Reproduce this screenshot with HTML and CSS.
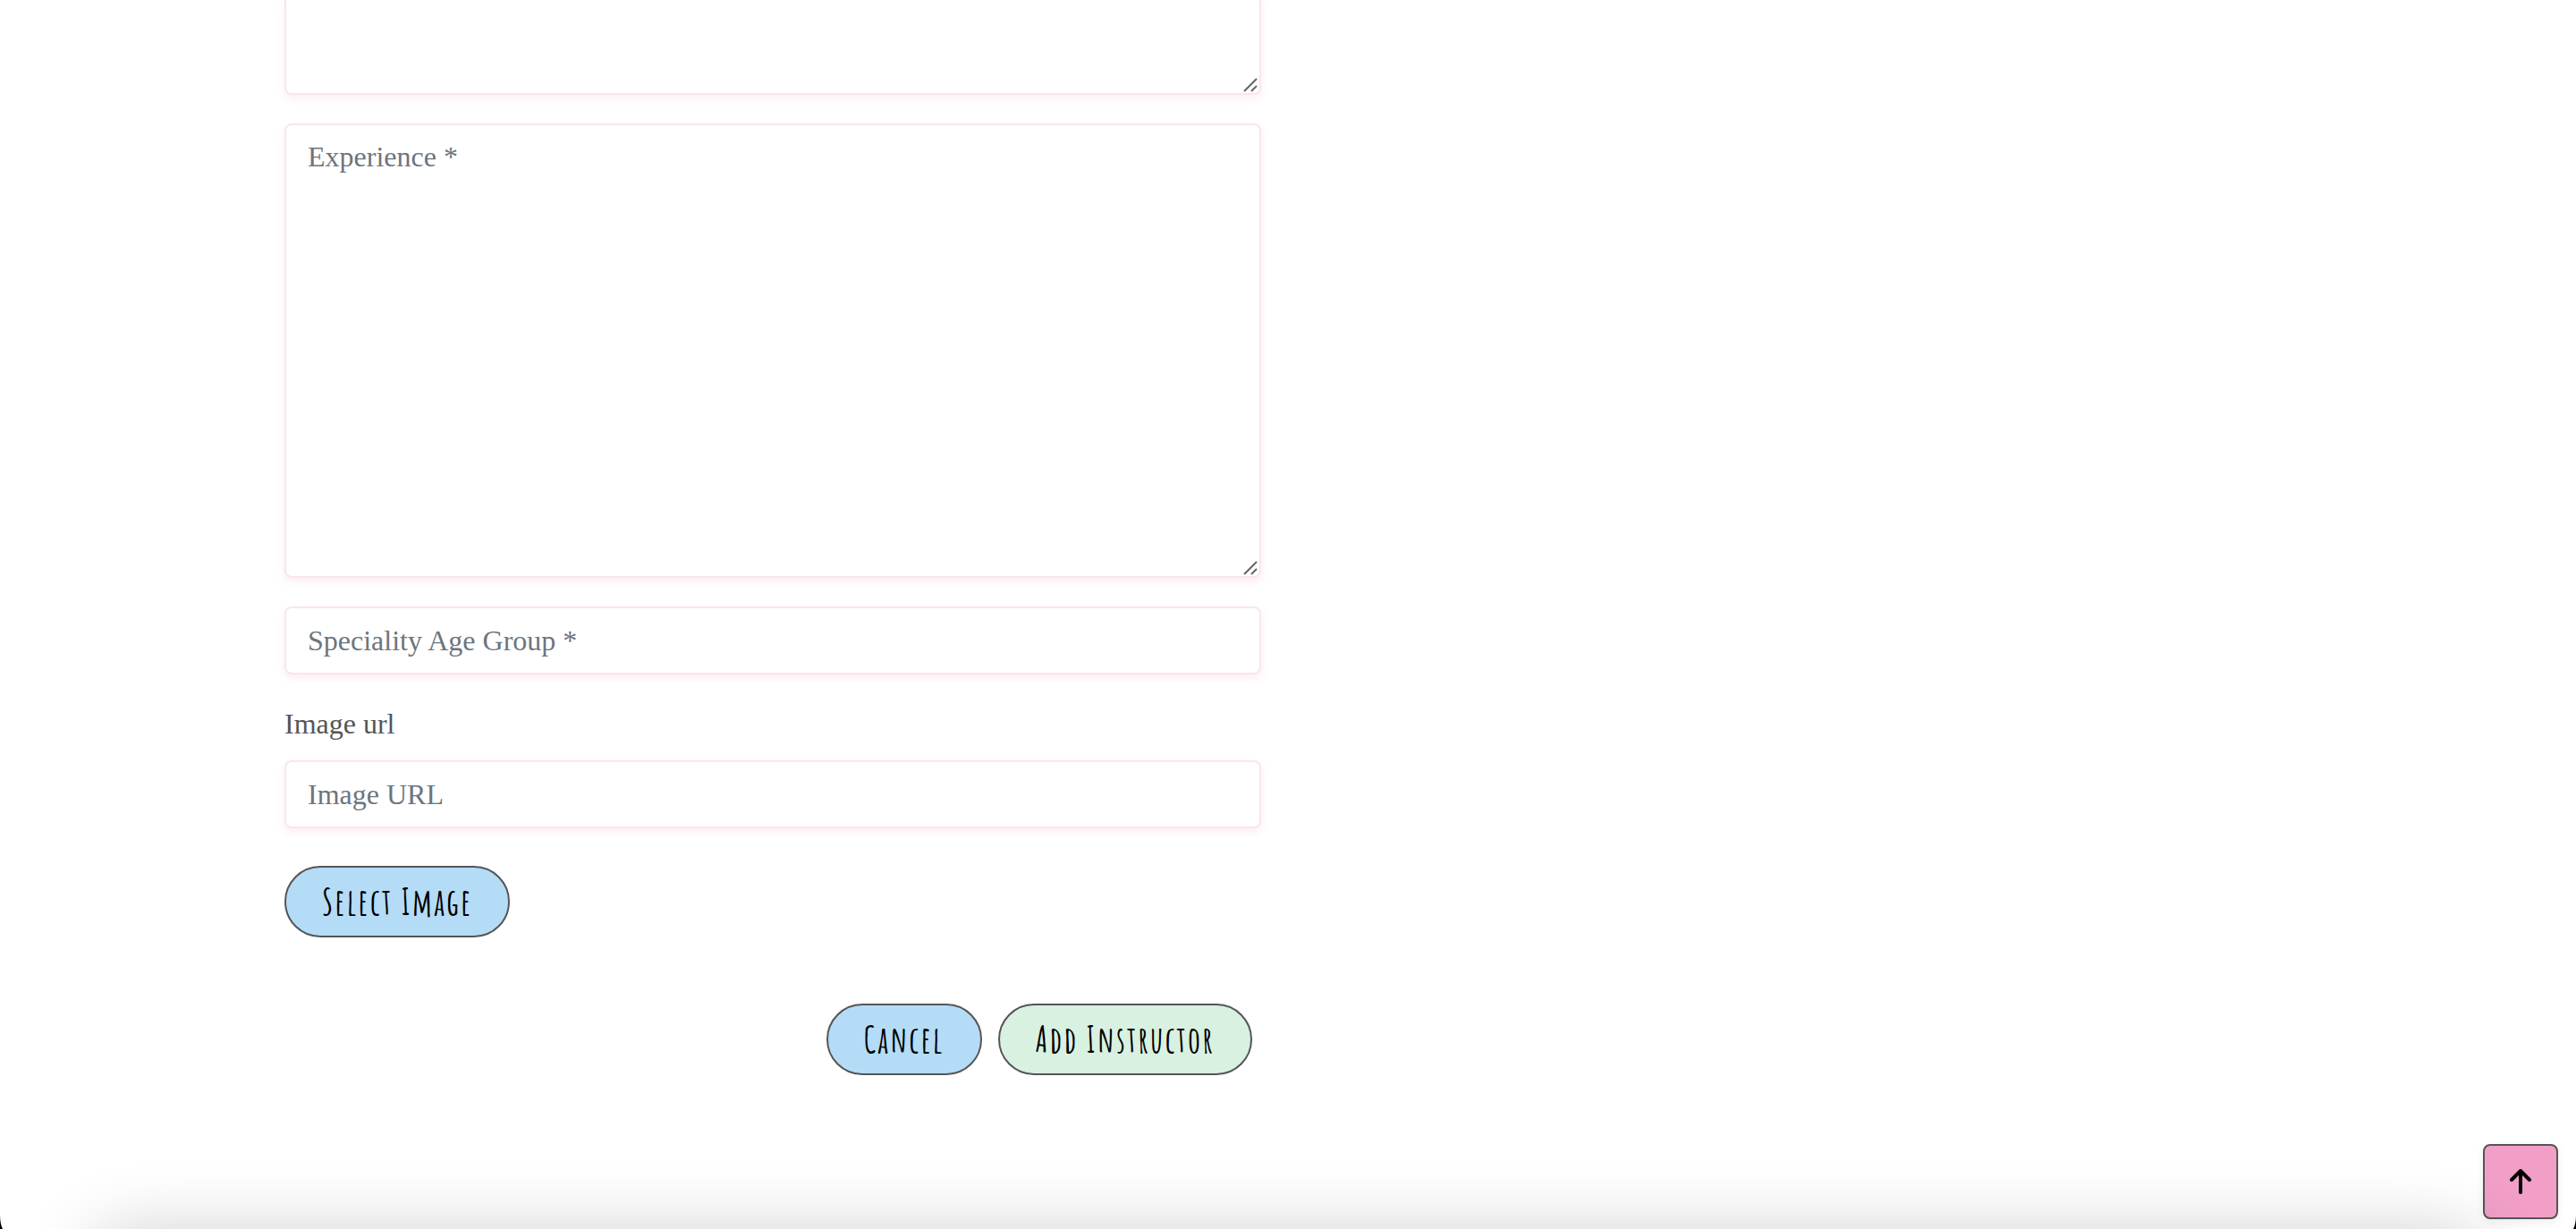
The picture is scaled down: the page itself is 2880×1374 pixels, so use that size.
FILE: index.html
```html
<!DOCTYPE html>
<html lang="en">
<head>
<meta charset="utf-8">
<meta name="viewport" content="width=device-width, initial-scale=1">
<title>Add Instructor</title>
<link rel="stylesheet" href="styles.css">
</head>
<body>
<main class="container">
  <form class="instructor-form">
    <div class="field">
      <textarea class="control control-continued" aria-label="Biography"></textarea>
      <svg class="grip" viewBox="0 0 16 16" aria-hidden="true"><path d="M1 15 15 1M9 15l6-6"/></svg>
    </div>
    <div class="field">
      <textarea class="control control-area" placeholder="Experience *" aria-label="Experience"></textarea>
      <svg class="grip" viewBox="0 0 16 16" aria-hidden="true"><path d="M1 15 15 1M9 15l6-6"/></svg>
    </div>
    <div class="field">
      <input class="control" type="text" placeholder="Speciality Age Group *" aria-label="Speciality age group">
    </div>
    <div class="field">
      <label class="label" for="image-url">Image url</label>
      <input class="control" id="image-url" type="text" placeholder="Image URL">
    </div>
    <div class="picker">
      <button class="btn btn-blue" type="button">Select Image</button>
    </div>
    <div class="actions">
      <button class="btn btn-blue" type="button">Cancel</button>
      <button class="btn btn-green" type="submit">Add Instructor</button>
    </div>
  </form>
</main>
<button class="to-top" type="button" aria-label="Back to top">
  <svg viewBox="0 0 24 28" aria-hidden="true"><path d="M12 26V2M2 12 12 2l10 10"/></svg>
</button>
<div class="window-edge" aria-hidden="true"></div>
<svg class="corner corner-left" viewBox="0 0 5 16" aria-hidden="true"><path d="M0 0Q0 10 3 16H0Z"/></svg>
<svg class="corner corner-right" viewBox="0 0 5 16" aria-hidden="true"><path d="M5 0Q5 10 2 16H5Z"/></svg>
</body>
</html>
```
FILE: styles.css
```css
* { box-sizing: border-box; }

body {
  margin: 0;
  background: #fff;
  color: #555;
  font: 32px/46px "Liberation Serif", "Times New Roman", serif;
  overflow: hidden;
}

.container {
  display: grid;
  grid-template-columns: 1fr 1fr;
  gap: 60px;
  max-width: 2244px;
  margin: 0 auto;
}

.instructor-form {
  display: flex;
  flex-direction: column;
  gap: 32px;
}

.field {
  position: relative;
  display: flex;
  flex-direction: column;
}

.control {
  width: 100%;
  height: 76px;
  padding: 12px 24px;
  border: 2px solid #fbe4f0;
  border-radius: 8px;
  background: #fff;
  color: #555;
  font: inherit;
  box-shadow: 0 4px 8px rgba(251, 228, 240, 0.7);
  resize: none;
}

.control::placeholder { color: #6c757d; opacity: 1; }

.control-area { height: 508px; }

.control-continued {
  height: 106px;
  border-top: 0;
  border-radius: 0 0 8px 8px;
}

.grip {
  position: absolute;
  right: 4px;
  bottom: 3px;
  width: 16px;
  height: 16px;
  fill: none;
  stroke: #666;
  stroke-width: 2;
}

.label { margin-bottom: 18px; }

.picker {
  display: flex;
  margin-top: 10px;
}

.btn {
  height: 80px;
  padding: 0 40px;
  border: 2px solid #555;
  border-radius: 40px;
  color: #000;
  font: bold 40px/48px "Amatic SC", "Liberation Sans Narrow", sans-serif;
  letter-spacing: 2px;
  white-space: nowrap;
}

.btn-blue { background: #b4dcf6; }
.btn-green { background: #d8f1e0; }

.actions {
  display: flex;
  justify-content: flex-end;
  gap: 18px;
  margin-top: 42px;
  padding-right: 10px;
}

.to-top {
  position: fixed;
  right: 20px;
  bottom: 11px;
  display: grid;
  place-items: center;
  width: 84px;
  height: 84px;
  padding: 0;
  border: 2px solid #555;
  border-radius: 8px;
  background: #f19fc7;
  box-shadow: 0 4px 12px rgba(0, 0, 0, 0.06);
}

.to-top svg {
  width: 24px;
  height: 28px;
  fill: none;
  stroke: #000;
  stroke-width: 4;
  stroke-linecap: round;
  stroke-linejoin: round;
}

.window-edge {
  position: fixed;
  right: 100px;
  bottom: -80px;
  left: 100px;
  height: 80px;
  border-radius: 40px;
  box-shadow: 0 4px 80px rgba(0, 0, 0, 0.2);
  pointer-events: none;
}

.corner {
  position: fixed;
  bottom: 0;
  width: 5px;
  height: 16px;
}

.corner-left { left: 0; }
.corner-right { right: 0; }
```
